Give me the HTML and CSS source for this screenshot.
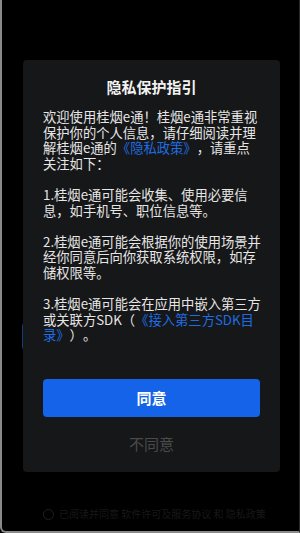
FILE: index.html
```html
<!DOCTYPE html>
<html lang="zh-CN">
<head>
<meta charset="utf-8">
<title>隐私保护指引</title>
<link rel="stylesheet" href="styles.css">
</head>
<body>
<div class="screen">
  <div class="page">
    <div class="login-btn"></div>
    <div class="agree-row">
      <span class="radio"></span>
      <span class="agree-text">已阅读并同意 软件许可及服务协议 和 隐私政策</span>
    </div>
  </div>
  <div class="dialog">
    <h1 class="dialog-title">隐私保护指引</h1>
    <div class="dialog-body">
      <p>欢迎使用桂烟e通！桂烟e通非常重视保护你的个人信息，请仔细阅读并理解桂烟e通的<a class="link">《隐私政策》</a>，请重点关注如下：</p>
      <p>1.桂烟e通可能会收集、使用必要信息，如手机号、职位信息等。</p>
      <p>2.桂烟e通可能会根据你的使用场景并经你同意后向你获取系统权限，如存储权限等。</p>
      <p>3.桂烟e通可能会在应用中嵌入第三方或关联方SDK（<a class="link">《接入第三方SDK目录》</a>）。</p>
    </div>
    <button class="btn-agree">同意</button>
    <button class="btn-disagree">不同意</button>
  </div>
</div>
</body>
</html>
```

FILE: styles.css
```css
* { box-sizing: border-box; }
html, body {
  margin: 0;
  padding: 0;
  background: #000;
}
body {
  font-family: "Noto Sans CJK SC", "Noto Sans", sans-serif;
  width: 300px;
  height: 533px;
  overflow: hidden;
}
.screen {
  position: relative;
  width: 300px;
  height: 533px;
  background: #000;
  border-left: 2px solid #8a8a8a;
  border-bottom: 2px solid #8a8a8a;
  border-right: 1px solid #2a2a2a;
  border-bottom-left-radius: 6px;
  overflow: hidden;
}
.page {
  display: flex;
  flex-direction: column;
  padding: 322px 19px 0 20px;
}
.login-btn {
  height: 29px;
  border: 1px solid #143a78;
  border-radius: 4px;
  background: #000;
}
.agree-row {
  margin-top: 156px;
  display: flex;
  align-items: center;
  gap: 5px;
  padding-left: 21px;
}
.radio {
  width: 11px;
  height: 11px;
  border: 1px solid #202020;
  border-radius: 50%;
}
.agree-text {
  font-size: 10px;
  line-height: 14px;
  color: #181818;
  white-space: nowrap;
}
.dialog {
  position: absolute;
  left: 21px;
  top: 60px;
  width: 257px;
  background: #161718;
  border-radius: 4px;
  padding: 16px 20px 18px 20px;
  display: flex;
  flex-direction: column;
  align-items: stretch;
}
.dialog-title {
  margin: 0;
  font-size: 15px;
  line-height: 22px;
  font-weight: 700;
  color: #f2f2f2;
  text-align: center;
}
.dialog-body {
  margin-top: 11px;
  width: 219px;
  font-size: 13.3px;
  line-height: 15.6px;
  color: #e6e6e6;
  text-spacing-trim: space-all;
}
.dialog-body p {
  margin: 0 0 15.6px 0;
}
.dialog-body p:last-child {
  margin-bottom: 0;
}
.link {
  color: #1f6de2;
  text-decoration: none;
}
.btn-agree {
  margin-top: 36px;
  height: 38px;
  width: 217px;
  border: none;
  border-radius: 4px;
  background: #1463e8;
  color: #fff;
  font-family: inherit;
  font-size: 15px;
  font-weight: 700;
}
.btn-disagree {
  margin-top: 17px;
  height: 20px;
  padding: 0;
  border: none;
  background: transparent;
  color: #4a4a4a;
  font-family: inherit;
  font-size: 15px;
  line-height: 20px;
}
```
